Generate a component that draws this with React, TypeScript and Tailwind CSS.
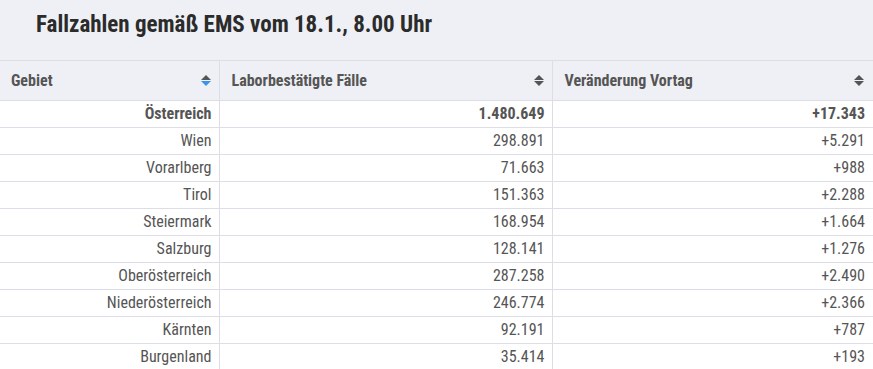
import React from 'react';

type Row = { name: string; cases: string; change: string; bold?: boolean };

const rows: Row[] = [
    { name: 'Österreich', cases: '1.480.649', change: '+17.343', bold: true },
    { name: 'Wien', cases: '298.891', change: '+5.291' },
    { name: 'Vorarlberg', cases: '71.663', change: '+988' },
    { name: 'Tirol', cases: '151.363', change: '+2.288' },
    { name: 'Steiermark', cases: '168.954', change: '+1.664' },
    { name: 'Salzburg', cases: '128.141', change: '+1.276' },
    { name: 'Oberösterreich', cases: '287.258', change: '+2.490' },
    { name: 'Niederösterreich', cases: '246.774', change: '+2.366' },
    { name: 'Kärnten', cases: '92.191', change: '+787' },
    { name: 'Burgenland', cases: '35.414', change: '+193' },
];

function SortIcon({ active }: { active?: boolean }) {
    return (
        <svg width="10" height="11" viewBox="0 0 10 11" className="shrink-0">
            <polygon points="5,0 10,5 0,5" fill="#555555" />
            <polygon
                points="0,6 10,6 5,11"
                fill={active ? '#3b94e8' : '#555555'}
            />
        </svg>
    );
}

function HeadCell({
    label,
    active,
    className,
}: {
    label: string;
    active?: boolean;
    className?: string;
}) {
    return (
        <th
            className={`h-[40px] border-r border-[#dcdde6] p-0 text-left font-bold ${className ?? ''}`}
        >
            <div className="flex items-center justify-between pr-[8px]">
                <span>{label}</span>
                <SortIcon active={active} />
            </div>
        </th>
    );
}

export default function App() {
    return (
        <div className="h-[369px] w-[873px] overflow-hidden bg-white font-['Roboto_Condensed','Liberation_Sans',sans-serif] text-[16px] text-[#555555]">
            {/* Title */}
            <div className="h-[60px] bg-[#eef0f5] pt-[8px] pl-[36px]">
                <h1 className="text-[23px] leading-[34px] font-bold text-[#2b2b2b]">
                    Fallzahlen gemäß EMS vom 18.1., 8.00 Uhr
                </h1>
            </div>

            <table className="w-full table-fixed border-collapse">
                <colgroup>
                    <col className="w-[219px]" />
                    <col className="w-[333px]" />
                    <col />
                </colgroup>
                <thead>
                    <tr className="border-y border-[#dcdde6] bg-[#eff0f5]">
                        <HeadCell label="Gebiet" active className="[&>div]:pl-[11px]" />
                        <HeadCell label="Laborbestätigte Fälle" className="[&>div]:pl-[12px]" />
                        <HeadCell label="Veränderung Vortag" className="border-r-0 [&>div]:pl-[12px] [&>div]:pr-[9px]" />
                    </tr>
                </thead>
                <tbody>
                    {rows.map((r) => (
                        <tr
                            key={r.name}
                            className={`h-[27px] border-b border-[#dcdde6] leading-[26px] ${r.bold ? 'font-bold' : ''}`}
                        >
                            <td className="border-r border-[#dcdde6] p-0 pr-[7px] text-right">
                                {r.name}
                            </td>
                            <td className="border-r border-[#dcdde6] p-0 pr-[7px] text-right">
                                {r.cases}
                            </td>
                            <td className="p-0 pr-[8px] text-right">{r.change}</td>
                        </tr>
                    ))}
                </tbody>
            </table>
        </div>
    );
}
